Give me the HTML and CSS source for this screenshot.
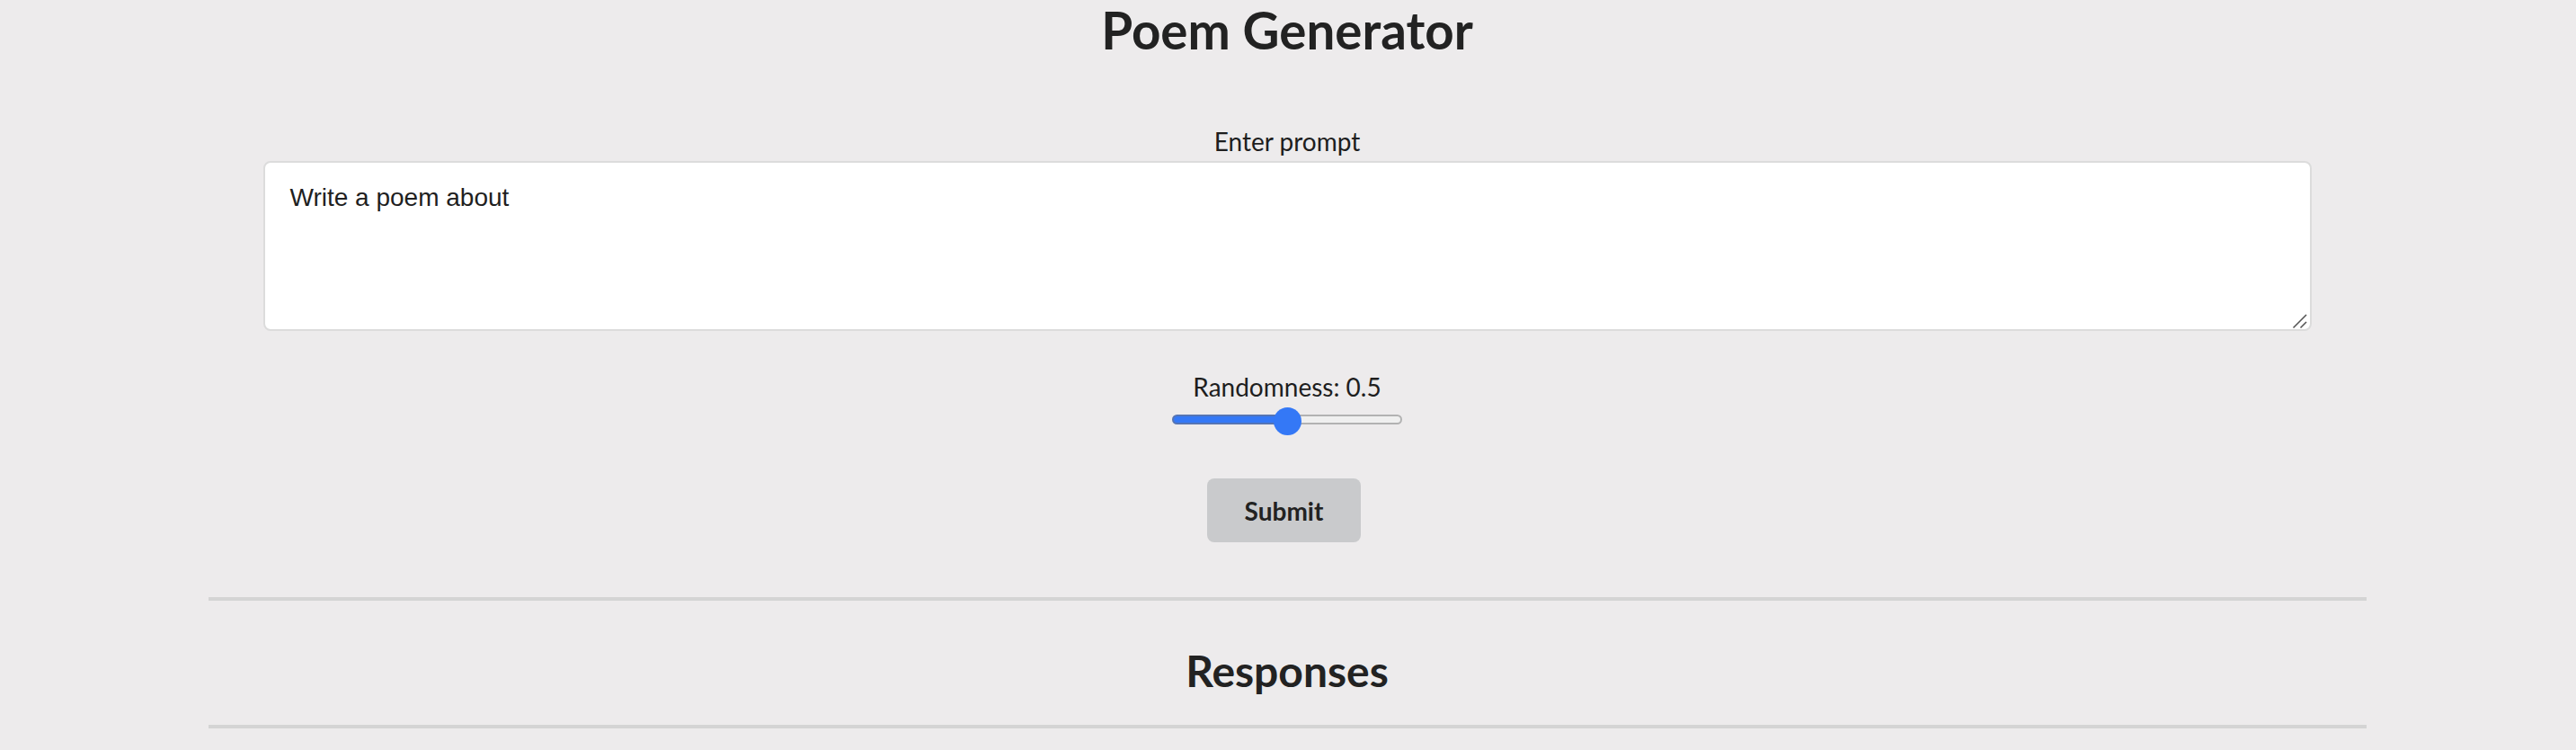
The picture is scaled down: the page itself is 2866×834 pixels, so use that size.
FILE: index.html
```html
<!DOCTYPE html>
<html lang="en">
<head>
<meta charset="utf-8">
<title>Poem Generator</title>
<link rel="stylesheet" href="styles.css">
</head>
<body>
<main class="page">
  <h1 class="title">Poem Generator</h1>
  <form class="form">
    <label class="field-label" for="prompt">Enter prompt</label>
    <div class="textarea-wrap">
      <textarea id="prompt" class="prompt">Write a poem about</textarea>
      <svg class="grip" width="18" height="18" viewBox="0 0 18 18" aria-hidden="true">
        <line x1="1.5" y1="16.5" x2="16" y2="2" stroke="#555" stroke-width="1.6"/>
        <line x1="9.5" y1="16.5" x2="16" y2="10" stroke="#555" stroke-width="1.6"/>
      </svg>
    </div>
    <label class="field-label field-label-range" for="randomness">Randomness: 0.5</label>
    <input id="randomness" class="range" type="range" min="0" max="1" step="0.1" value="0.5">
    <button type="button" class="submit">Submit</button>
  </form>
  <hr class="rule rule-top">
  <h2 class="subtitle">Responses</h2>
  <hr class="rule rule-bottom">
</main>
</body>
</html>
```
FILE: styles.css
```css
html, body {
  margin: 0;
  padding: 0;
}

body {
  background: #edebec;
  color: #222222;
  font-family: Lato, "Noto Sans", sans-serif;
}

.page {
  display: flex;
  flex-direction: column;
  align-items: center;
  padding-right: 2px;
}

.title {
  margin: 0;
  font-size: 56.5px;
  line-height: 66px;
  font-weight: 700;
  color: #222222;
}

.form {
  display: flex;
  flex-direction: column;
  align-items: center;
  margin-top: 75px;
}

.field-label {
  display: block;
  font-size: 28px;
  line-height: 32px;
  color: #1e1e1e;
}

.field-label-range {
  margin-top: 46px;
}

.textarea-wrap {
  position: relative;
  margin-top: 6px;
  width: 2279px;
  height: 189px;
}

.prompt {
  display: block;
  box-sizing: border-box;
  width: 100%;
  height: 100%;
  margin: 0;
  padding: 23px 28px;
  border: 2px solid #dcdcdc;
  border-radius: 8px;
  background: #ffffff;
  color: #1f1f1f;
  font-family: "Liberation Sans", Arial, sans-serif;
  font-size: 28px;
  line-height: normal;
  resize: none;
  outline: none;
}

.grip {
  position: absolute;
  right: 4px;
  bottom: 2px;
}

.range {
  -webkit-appearance: none;
  appearance: none;
  display: block;
  width: 256px;
  height: 32px;
  margin: 4px 0 0 0;
  padding: 0;
  background: transparent;
}

.range::-webkit-slider-runnable-track {
  height: 11px;
  border: 2px solid transparent;
  border-radius: 8px;
  background:
    linear-gradient(to right, #3478f6 50%, #efefef 50%) padding-box,
    linear-gradient(to right, #5574b4 50%, #b2b2b2 50%) border-box;
}

.range::-webkit-slider-thumb {
  -webkit-appearance: none;
  appearance: none;
  width: 31px;
  height: 31px;
  margin-top: -10px;
  border: none;
  border-radius: 50%;
  background: #3478f6;
}

.submit {
  margin: 50px 7px 0 0;
  height: 71px;
  padding: 0 42px;
  border: none;
  border-radius: 8px;
  background: #c9cacc;
  color: #222222;
  font-family: Lato, "Noto Sans", sans-serif;
  font-size: 28px;
  font-weight: 700;
}

.rule {
  width: 2401px;
  height: 4px;
  margin: 0;
  border: none;
  background: #d4d4d4;
}

.rule-top {
  margin-top: 61px;
}

.subtitle {
  margin: 50px 0 0 0;
  font-size: 48px;
  line-height: 56px;
  font-weight: 700;
  color: #222222;
}

.rule-bottom {
  margin-top: 32px;
}
```
